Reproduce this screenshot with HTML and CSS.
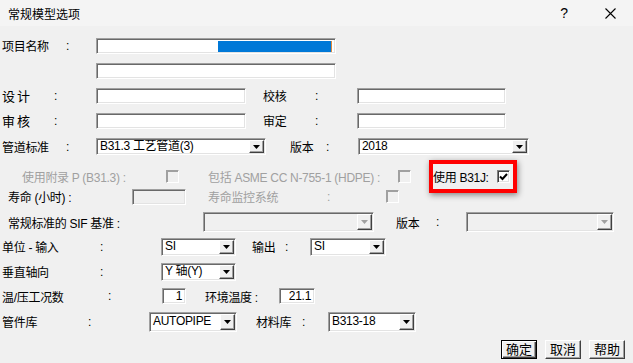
FILE: index.html
```html
<!DOCTYPE html>
<html lang="zh-CN">
    <head>
        <meta charset="UTF-8">
        <meta name="viewport" content="width=device-width, initial-scale=1.0">
        <link rel="stylesheet" href="styles.css">
        <title>常规模型选项</title>
    </head>
    <body>
        <div class="titlebar">
            <span class="title">常规模型选项</span>
            <span class="help">?</span>
            <span class="close">
                <svg width="11" height="11" viewBox="0 0 11 11"><path d="M0.5 0.5L10.5 10.5M10.5 0.5L0.5 10.5" stroke="#000" stroke-width="1.1" fill="none"/></svg>
            </span>
        </div>

        <div class="form">
            <div class="row r-name">
                <span>项目名称</span><span>:</span>
                <span class="field name-field"><span class="sel"></span></span>
            </div>
            <div class="row r-name2">
                <span class="field"></span>
            </div>
            <div class="row r-people">
                <span class="wide">设计</span><span>:</span><span class="field"></span><span></span>
                <span>校核</span><span>:</span><span class="field"></span>
            </div>
            <div class="row r-people">
                <span class="wide">审核</span><span>:</span><span class="field"></span><span></span>
                <span>审定</span><span>:</span><span class="field"></span>
            </div>
            <div class="row r-code">
                <span>管道标准</span><span>:</span>
                <span class="combo"><span class="val">B31.3 工艺管道(3)</span><span class="drop"><svg width="7" height="4"><path d="M0 0h7L3.5 4z"/></svg></span></span>
                <span></span>
                <span>版本</span><span>:</span>
                <span class="combo"><span class="val">2018</span><span class="drop"><svg width="7" height="4"><path d="M0 0h7L3.5 4z"/></svg></span></span>
            </div>
            <div class="row r-opts">
                <span class="off">使用附录 P (B31.3) :</span><span class="check"></span><span></span>
                <span class="off">包括 ASME CC N-755-1 (HDPE) :</span><span class="check"></span><span></span>
                <span class="mark">
                    <span>使用 B31J:</span>
                    <span class="check on"><svg width="9" height="8" viewBox="0 0 9 8"><path d="M1 3.5L3.5 6L8 1" stroke="#000" stroke-width="2" fill="none"/></svg></span>
                </span>
            </div>
            <div class="row r-life">
                <span>寿命 (小时) :</span><span class="field off-field"></span><span></span>
                <span class="off">寿命监控系统</span><span class="off">:</span><span class="check"></span>
            </div>
            <div class="row r-sif">
                <span>常规标准的 SIF 基准 :</span>
                <span class="combo off-field tall"><span class="val"></span><span class="drop"><svg width="7" height="4"><path d="M0 0h7L3.5 4z" fill="#a0a0a0"/></svg></span></span>
                <span></span>
                <span>版本</span><span>:</span>
                <span class="combo off-field tall"><span class="val"></span><span class="drop"><svg width="7" height="4"><path d="M0 0h7L3.5 4z" fill="#a0a0a0"/></svg></span></span>
            </div>
            <div class="row r-unit">
                <span>单位 - 输入</span><span>:</span>
                <span class="combo mid"><span class="val">SI</span><span class="drop"><svg width="7" height="4"><path d="M0 0h7L3.5 4z"/></svg></span></span>
                <span></span>
                <span>输出</span><span>:</span>
                <span class="combo mid"><span class="val">SI</span><span class="drop"><svg width="7" height="4"><path d="M0 0h7L3.5 4z"/></svg></span></span>
            </div>
            <div class="row r-axis">
                <span>垂直轴向</span><span>:</span>
                <span class="combo mid"><span class="val">Y 轴(Y)</span><span class="drop"><svg width="7" height="4"><path d="M0 0h7L3.5 4z"/></svg></span></span>
            </div>
            <div class="row r-temp">
                <span>温/压工况数</span><span>:</span>
                <span class="field num">1</span><span></span>
                <span>环境温度 :</span>
                <span class="field num">21.1</span>
            </div>
            <div class="row r-lib">
                <span>管件库</span><span>:</span>
                <span class="combo tall"><span class="val">AUTOPIPE</span><span class="drop"><svg width="7" height="4"><path d="M0 0h7L3.5 4z"/></svg></span></span>
                <span></span>
                <span>材料库</span><span>:</span>
                <span class="combo tall"><span class="val">B313-18</span><span class="drop"><svg width="7" height="4"><path d="M0 0h7L3.5 4z"/></svg></span></span>
            </div>
            <div class="row r-buttons">
                <button class="btn default">确定</button>
                <button class="btn">取消</button>
                <button class="btn">帮助</button>
            </div>
        </div>
    </body>
</html>
```

FILE: styles.css
```css
* {
    box-sizing: border-box;
}

body {
    margin: 0;
    width: 633px;
    height: 363px;
    overflow: hidden;
    background-color: #f0f0f0;
    color: #000;
    font-family: "Liberation Sans", "Noto Sans CJK SC", sans-serif;
    font-size: 12px;
    letter-spacing: -0.3px;
}

.titlebar {
    height: 26px;
    display: flex;
    align-items: center;
    background-color: #f4f4f4;
}

.title {
    flex: 1;
    padding-left: 8px;
    font-family: "Noto Sans CJK SC", sans-serif;
    letter-spacing: 0;
}

.help {
    width: 46px;
    text-align: center;
    font-size: 14px;
}

.close {
    width: 46px;
    display: flex;
    justify-content: center;
}

.form {
    display: grid;
    grid-template-rows: 25px 25px 25px 25px 27px 23px 27px 24px 25px 25px 24px 27px 28px;
    padding: 7px 0 0 2px;
}

.row {
    display: grid;
    grid-auto-flow: column;
    justify-content: start;
    align-items: center;
    white-space: nowrap;
}

.r-name { grid-template-columns: 64px 30px 240px; }
.r-name2 { padding-left: 94px; grid-template-columns: 240px; }
.r-people { grid-template-columns: 52px 42px 150px 17px 52px 42px 149px; }
.r-code { grid-template-columns: 64px 30px 170px 24px 36px 32px 171px; }
.r-opts { padding-left: 20px; grid-template-columns: 144px 13px 29px 190px 13px 18px 88px; }
.r-life { padding-left: 6px; grid-template-columns: 124px 54px 22px 119px 59px 13px; }
.r-sif { padding-left: 6px; grid-template-columns: 195px 171px 22px 40px 30px 148px; }
.r-unit { grid-template-columns: 98px 61px 75px 16px 33px 25px 76px; }
.r-axis { grid-template-columns: 98px 61px 75px; }
.r-temp { grid-template-columns: 106px 54px 24px 19px 74px 36px; }
.r-lib { grid-template-columns: 86px 61px 88px 19px 46px 26px 88px; }

.wide {
    font-size: 13px;
    letter-spacing: 2px;
}

.off {
    color: #a0a0a0;
}

/* sunken edit box */
.field {
    display: block;
    height: 16px;
    background-color: #fff;
    border: 1px solid;
    border-color: #a0a0a0 #fff #fff #a0a0a0;
    box-shadow: inset 1px 1px #696969, inset -1px -1px #e3e3e3;
}

.name-field {
    display: flex;
    padding: 2px 3px 1px 2px;
}

.sel {
    margin-left: 119px;
    flex: 1;
    background-color: #0078d7;
    border-right: 1px solid #e08a3c;
}

.num {
    text-align: right;
    padding-right: 3px;
    line-height: 14px;
}

.off-field {
    background-color: #f0f0f0;
}

.combo {
    display: flex;
    height: 17px;
    background-color: #fff;
    border: 1px solid;
    border-color: #a0a0a0 #fff #fff #a0a0a0;
    box-shadow: inset 1px 1px #696969, inset -1px -1px #e3e3e3;
    padding: 1px;
}

.combo.mid {
    height: 18px;
}

.combo.tall {
    height: 20px;
}

.combo.off-field {
    background-color: #f0f0f0;
}

.val {
    flex: 1;
    padding-left: 2px;
    line-height: 13px;
    align-self: center;
    overflow: hidden;
}

.drop {
    width: 15px;
    display: flex;
    align-items: center;
    justify-content: center;
    background-color: #f0f0f0;
    border: 1px solid;
    border-color: #fff #404040 #404040 #fff;
    box-shadow: inset -1px -1px #a0a0a0;
}

.check {
    display: flex;
    align-items: center;
    justify-content: center;
    width: 13px;
    height: 13px;
    background-color: #f0f0f0;
    border: 1px solid;
    border-color: #a0a0a0 #fff #fff #a0a0a0;
    box-shadow: inset 1px 1px #a0a0a0;
}

.check.on {
    background-color: #fff;
    border-color: #808080 #fff #fff #808080;
    box-shadow: inset 1px 1px #404040, inset -1px -1px #e3e3e3;
}

.mark {
    display: flex;
    align-items: center;
    height: 33px;
    padding: 0 3px 0 0;
    border: 4px solid #f00;
    box-shadow: 1px 2px 6px rgba(0, 0, 0, 0.45);
}

.mark .check {
    margin-left: auto;
}

.r-buttons {
    justify-content: end;
    padding-right: 8px;
    gap: 8px;
}

.btn {
    width: 36px;
    height: 19px;
    padding: 0;
    font-family: "Noto Sans CJK SC", sans-serif;
    font-size: 13px;
    line-height: 14px;
    color: #000;
    background-color: #f0f0f0;
    border: 1px solid;
    border-color: #fff #404040 #404040 #fff;
    box-shadow: inset -1px -1px #a0a0a0;
}

.btn.default {
    border: 1px solid #000;
    box-shadow: inset 1px 1px #fff, inset -1px -1px #404040, inset -2px -2px #a0a0a0;
}
```
